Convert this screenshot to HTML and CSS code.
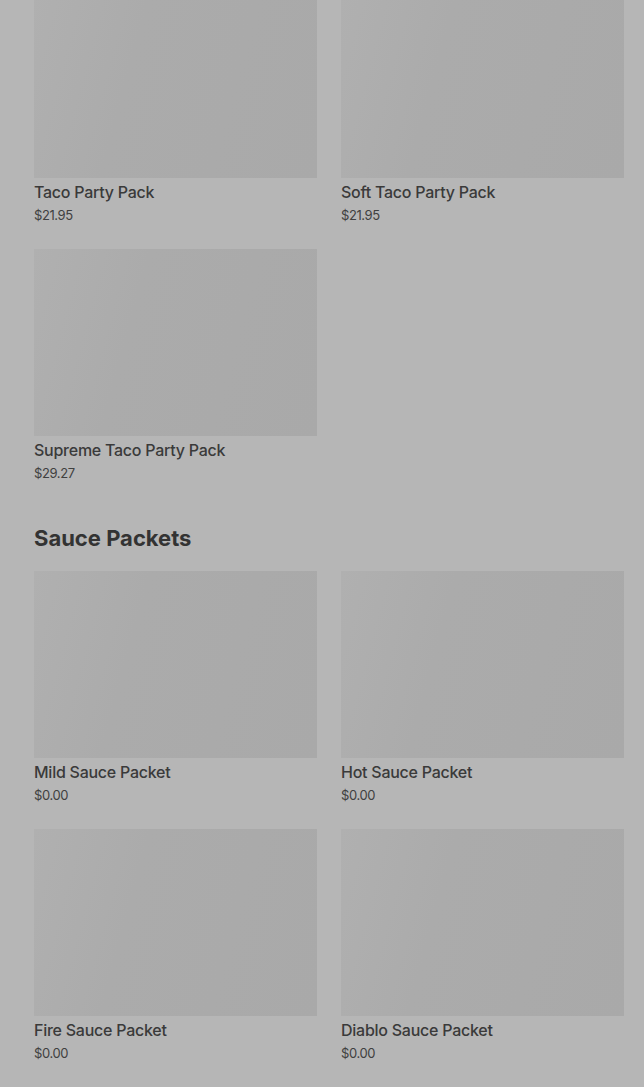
FILE: index.html
```html
<!DOCTYPE html>
<html>
<head>
<meta charset="utf-8" />
<title>Menu</title>
<link rel="stylesheet" href="styles.css">
</head>
<body>
<div class="menu">
	<div class="grid">
		<div class="item">
			<div class="pic"></div>
			<div class="name">Taco Party Pack</div>
			<div class="price">$21.95</div>
		</div>
		<div class="item">
			<div class="pic"></div>
			<div class="name">Soft Taco Party Pack</div>
			<div class="price">$21.95</div>
		</div>
		<div class="item">
			<div class="pic"></div>
			<div class="name">Supreme Taco Party Pack</div>
			<div class="price">$29.27</div>
		</div>
	</div>

	<h2 class="section_title">Sauce Packets</h2>
	<div class="grid">
		<div class="item">
			<div class="pic"></div>
			<div class="name">Mild Sauce Packet</div>
			<div class="price">$0.00</div>
		</div>
		<div class="item">
			<div class="pic"></div>
			<div class="name">Hot Sauce Packet</div>
			<div class="price">$0.00</div>
		</div>
		<div class="item">
			<div class="pic"></div>
			<div class="name">Fire Sauce Packet</div>
			<div class="price">$0.00</div>
		</div>
		<div class="item">
			<div class="pic"></div>
			<div class="name">Diablo Sauce Packet</div>
			<div class="price">$0.00</div>
		</div>
	</div>
</div>
</body>
</html>
```

FILE: styles.css
```css
html,body{margin:0;padding:0;}
body{background:#b6b6b6;color:#3a3a3a;font:normal 14px/1.5 Inter, "Noto Sans", Arial, sans-serif;overflow:hidden;}
.menu{padding:0 20px 40px 34px;margin-top:-9px;}
.grid{display:grid;grid-template-columns:1fr 1fr;column-gap:24px;row-gap:23px;}
.pic{height:187px;background:linear-gradient(105deg,#b0b0b0 0%,#ababab 35%,#a9a9a9 100%);}
.name{margin-top:2px;font-size:16px;line-height:24px;font-weight:500;letter-spacing:-0.25px;color:#3a3a3a;}
.price{font-size:13px;line-height:22px;font-weight:400;color:#404040;letter-spacing:-0.4px;}
.section_title{margin:38px 0 17px;font-size:22px;line-height:32px;font-weight:700;color:#333;}
```
